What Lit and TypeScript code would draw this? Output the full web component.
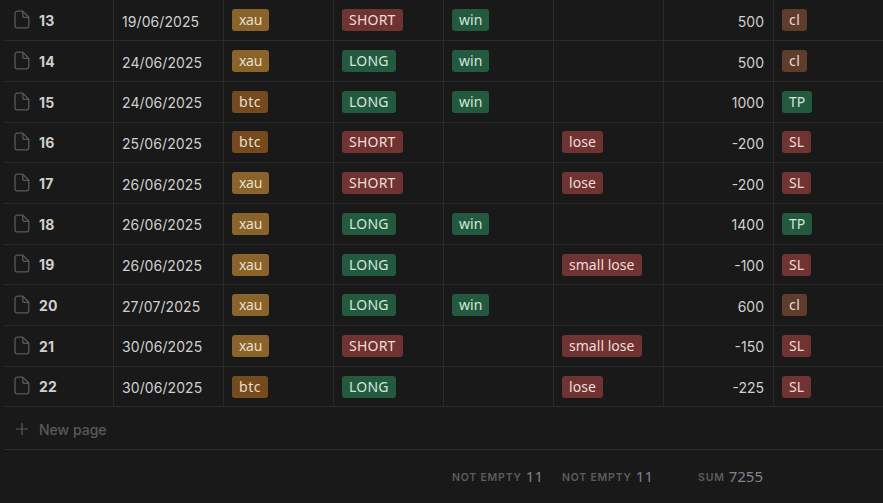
import { LitElement, html, css, svg } from "lit";
import { customElement } from "lit/decorators.js";

type Row = [string, string, string, string, string, string, string, string];
const rows: Row[] = [
  ["13", "19/06/2025", "xau", "SHORT", "win", "", "500", "cl"],
  ["14", "24/06/2025", "xau", "LONG", "win", "", "500", "cl"],
  ["15", "24/06/2025", "btc", "LONG", "win", "", "1000", "TP"],
  ["16", "25/06/2025", "btc", "SHORT", "", "lose", "-200", "SL"],
  ["17", "26/06/2025", "xau", "SHORT", "", "lose", "-200", "SL"],
  ["18", "26/06/2025", "xau", "LONG", "win", "", "1400", "TP"],
  ["19", "26/06/2025", "xau", "LONG", "", "small lose", "-100", "SL"],
  ["20", "27/07/2025", "xau", "LONG", "win", "", "600", "cl"],
  ["21", "30/06/2025", "xau", "SHORT", "", "small lose", "-150", "SL"],
  ["22", "30/06/2025", "btc", "LONG", "", "lose", "-225", "SL"],
];
const tone: Record<string, string> = {
  xau: "gold", btc: "amber", SHORT: "red caps", LONG: "green caps", win: "green",
  lose: "red", "small lose": "red", cl: "brown", TP: "green", SL: "red",
};

@customElement("app-root")
export class AppRoot extends LitElement {
  static styles = css`
    :host { display: block; width: 883px; height: 503px; background: #191919; overflow: hidden;
      font-family: "Noto Sans", "Open Sans", sans-serif; font-size: 14px; color: #cfcfcf; }
    .table { margin-left: 4px; padding-top: 0.45px; }
    .row { display: grid; grid-template-columns: repeat(8, 110px); height: 40.7px; box-sizing: border-box;
      border-bottom: 1px solid #2a2a2a; }
    .cell { box-sizing: border-box; padding: 8.95px 8px 0; border-right: 1px solid #2a2a2a; min-width: 0; white-space: nowrap; }
    .cell:last-child { border-right: none; }
    .name { display: flex; align-items: center; gap: 9px; padding: 0 0 0 10px; font-weight: 700; font-family: "Inter", sans-serif; }
    .name svg { flex: none; width: 16px; height: 19px; margin-top: -1px; }
    .name span { padding-top: 1px; letter-spacing: 0.1px; }
    .date { padding: 11.5px 0 0 8px; line-height: 20px; letter-spacing: 0.08px; font-family: "Inter", sans-serif; }
    .num { padding: 11.5px 9px 0 0; line-height: 20px; text-align: right; font-family: "Inter", sans-serif; }
    .tag { display: block; width: fit-content; height: 22px; line-height: 22px; padding: 0 7px; border-radius: 3px; letter-spacing: 0.03px; }
    .gold { background: #89632a; color: #eadfcb; letter-spacing: -0.3px; }
    .amber { background: #744a1e; color: #eadfcb; letter-spacing: 0.6px; }
    .red { background: #6f3331; color: #efdcda; }
    .green { background: #235a3f; color: #d2e5da; }
    .brown { background: #5f3d2c; color: #eadcd3; letter-spacing: 0.5px; }
    .caps { letter-spacing: 0.22px; }
    .newp { display: flex; align-items: center; gap: 10px; padding: 2px 0 0 11px; height: 42.5px; box-sizing: border-box;
      border-bottom: 1px solid #2f2f2f; color: #5a5a5a; font-family: "Inter", sans-serif; font-weight: 500; }
    .newp svg { width: 14px; height: 14px; }
    .foot { display: grid; grid-template-columns: repeat(8, 110px); padding-top: 16px; }
    .calc { display: flex; justify-content: flex-end; align-items: baseline; gap: 4px; padding-right: 11px; white-space: nowrap; }
    .calc b { font-weight: 600; font-size: 10.5px; letter-spacing: 0.8px; color: #5c5c5c; font-family: "Inter", sans-serif; position: relative; top: -1px; }
    .calc span { font-size: 15px; color: #7d848b; }
  `;

  private tag(v: string) {
    return v ? html`<span class="tag ${tone[v]}">${v}</span>` : "";
  }

  private doc() {
    return html`<svg viewBox="0 0 16 19" fill="none" stroke="#585858" stroke-width="1.3" stroke-linejoin="round">
      ${svg`<path d="M3.2 1.2h5.6l6 6v8.4a2.2 2.2 0 0 1-2.2 2.2H3.2A2.2 2.2 0 0 1 1 15.6V3.4a2.2 2.2 0 0 1 2.2-2.2z"/><path d="M8.8 1.4v4a2 2 0 0 0 2 2h4"/>`}
    </svg>`;
  }

  render() {
    return html`<div class="table">
      ${rows.map(r => html`<div class="row">
        <div class="cell name">${this.doc()}<span>${r[0]}</span></div>
        <div class="cell date">${r[1]}</div>
        <div class="cell">${this.tag(r[2])}</div>
        <div class="cell">${this.tag(r[3])}</div>
        <div class="cell">${this.tag(r[4])}</div>
        <div class="cell">${this.tag(r[5])}</div>
        <div class="cell num">${r[6]}</div>
        <div class="cell">${this.tag(r[7])}</div>
      </div>`)}
      <div class="newp"><svg viewBox="0 0 14 14" stroke="#5a5a5a" stroke-width="1.2"><path d="M7 1v12M1 7h12"/></svg><span>New page</span></div>
      <div class="foot">
        <div></div><div></div><div></div><div></div>
        <div class="calc"><b>NOT EMPTY</b><span>11</span></div>
        <div class="calc"><b>NOT EMPTY</b><span>11</span></div>
        <div class="calc"><b>SUM</b><span>7255</span></div>
        <div></div>
      </div>
    </div>`;
  }
}
